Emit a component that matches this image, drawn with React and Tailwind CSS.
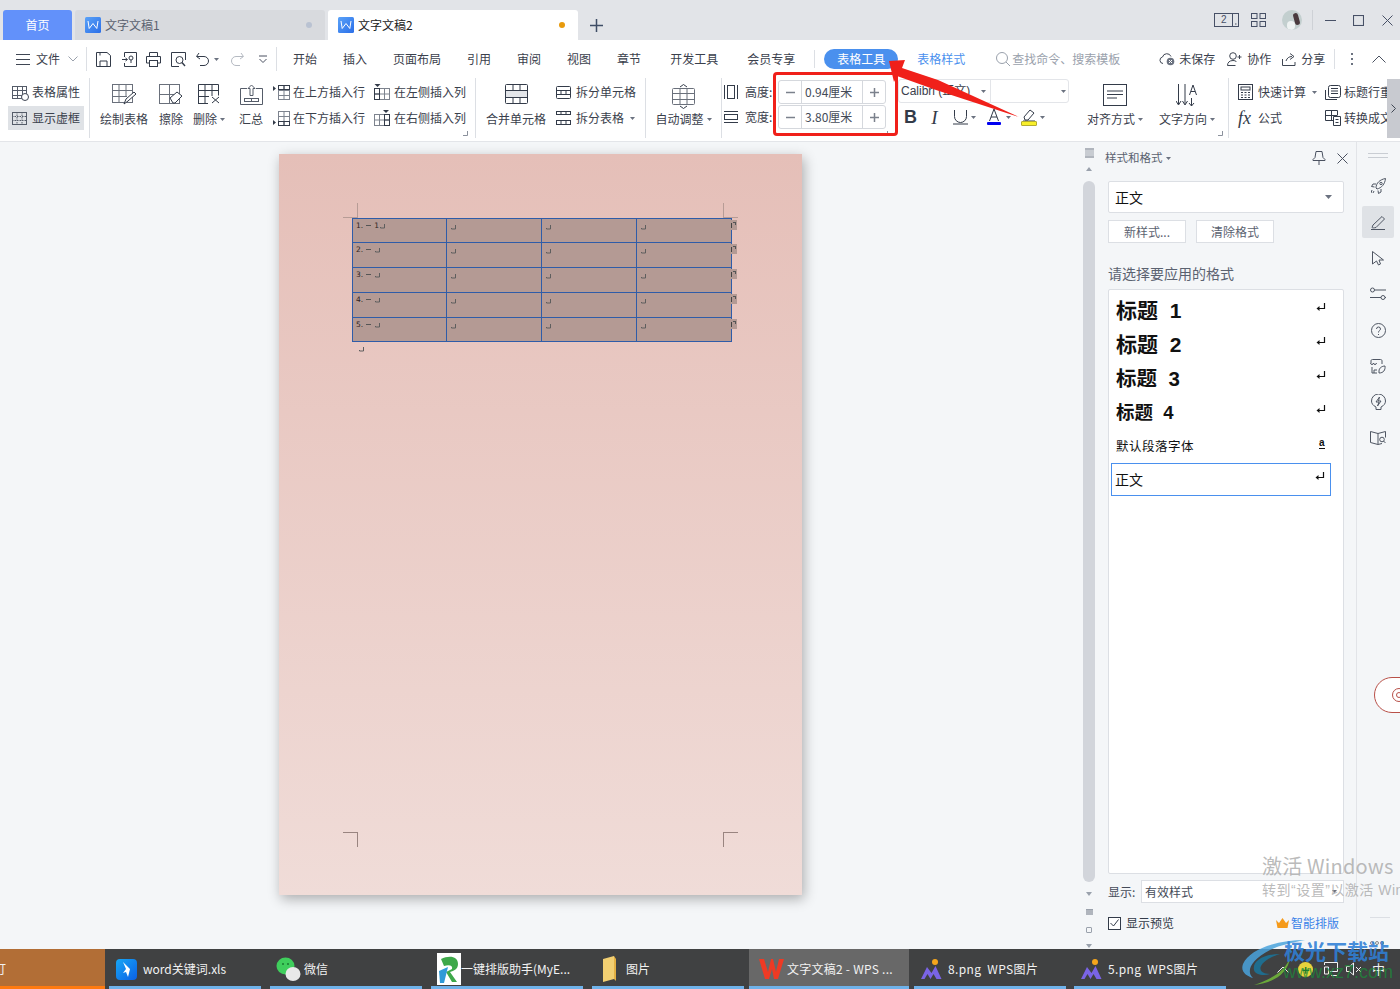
import React from "react";

const S = ({ w = 20, h = 20, vb, children, className = "" }) => (
  <svg width={w} height={h} viewBox={vb || `0 0 ${w} ${h}`} fill="none" stroke="currentColor" strokeWidth="1" className={"shrink-0 " + className}>
    {children}
  </svg>
);
const Caret = ({ className = "" }) => (
  <svg width="5" height="3" viewBox="0 0 5 3" className={"shrink-0 " + className}><path d="M0 0h5L2.500 3z" fill="#6b7280" /></svg>
);
const WDoc = () => (
  <svg width="16" height="16" viewBox="0 0 16 16" className="shrink-0">
    <defs><linearGradient id="wd" x1="0" y1="0" x2="1" y2="1"><stop offset="0" stopColor="#5aa2f8" /><stop offset="1" stopColor="#2b6fe8" /></linearGradient></defs>
    <rect width="16" height="16" rx="1.500" fill="url(#wd)" />
    <path d="M3 4l1.200 7.500L8 6.500l3.800 5L13 4" stroke="#fff" strokeWidth="1" fill="none" />
  </svg>
);
const Grid = ({ w = 16, h = 14, cols = 3, rows = 3, color = "#3f4653", fill = "none" }) => {
  const c = [], r = [];
  for (let i = 1; i < cols; i++) c.push(i);
  for (let i = 1; i < rows; i++) r.push(i);
  return (
    <S w={w} h={h} className="text-[#3f4653]">
      <rect x=".5" y=".5" width={w - 1} height={h - 1} fill={fill} stroke={color} />
      {c.map((i) => <path key={"c" + i} d={`M${Math.round((i * w) / cols) + 0.5} 0v${h}`} stroke={color} />)}
      {r.map((i) => <path key={"r" + i} d={`M0 ${Math.round((i * h) / rows) + 0.5}h${w}`} stroke={color} />)}
    </S>
  );
};

const Ret = ({ c = "#5e5e5e", className = "" }) => (
  <svg width="5" height="5" viewBox="0 0 5 5" className={"shrink-0 " + className}><path d="M4.500 0v4H.500M.500 4V3" stroke={c} fill="none" /></svg>
);
const RetBig = () => (
  <svg width="10" height="9" viewBox="0 0 10 9" className="shrink-0"><path d="M8.500 0v5.500H2" stroke="#111" strokeWidth="1.200" fill="none" /><path d="M3.500 3v5L.5 5.500z" fill="#111" /></svg>
);

const Sep = ({ h = "h-[24px]", className = "" }) => <div className={`w-px bg-[#dcdfe4] shrink-0 ${h} ${className}`} />;

function TitleBar() {
  return (
    <div className="h-[40px] bg-[#e2e4e8] shrink-0 flex items-end pl-[3px] text-[12px]">
      <div className="w-[69px] h-[30px] bg-[#6291fa] rounded-t-[3px] text-white flex items-center justify-center">首页</div>
      <div className="w-[250px] h-[30px] ml-[3px] bg-[#d8dade] rounded-t-[3px] flex items-center pl-[10px] pr-[13px] text-[#5b6270]">
        <WDoc /><span className="ml-[4px] flex-1">文字文稿1</span>
        <span className="w-[6px] h-[6px] rounded-full bg-[#b9c2d2]" />
      </div>
      <div className="w-[250px] h-[30px] ml-[3px] bg-white rounded-t-[3px] flex items-center pl-[10px] pr-[13px] text-[#222]">
        <WDoc /><span className="ml-[4px] flex-1">文字文稿2</span>
        <span className="w-[6px] h-[6px] rounded-full bg-[#e89a0c]" />
      </div>
      <div className="ml-[12px] h-[30px] flex items-center text-[#3f4d66]">
        <S w={13} h={13}><path d="M6.500 0v13M0 6.500h13" strokeWidth="1.500" /></S>
      </div>
      <div className="flex-1" />
      <div className="self-start h-[40px] flex items-center pr-[7px] text-[#475066]">
        <div className="relative w-[25px] h-[14px]">
          <S w={25} h={14}><rect x=".5" y=".5" width="24" height="13" /><path d="M18.500 0v14" /><path d="M21 11h1.500" /></S>
          <span className="absolute left-[7px] top-[2px] text-[10px] leading-[10px] font-['Liberation_Sans',sans-serif]">2</span>
        </div>
        <div className="ml-[12px]"><S w={15} h={14}><rect x=".5" y=".5" width="5.500" height="5" /><rect x="9" y=".5" width="5.500" height="5" /><rect x=".5" y="8.500" width="5.500" height="5" /><rect x="9" y="8.500" width="5.500" height="5" /></S></div>
        <div className="ml-[16px] w-[20px] h-[20px] rounded-full overflow-hidden bg-[#c3cfcf] relative">
          <div className="absolute right-[3px] top-[3px] w-[5px] h-[12px] rounded-full bg-[#4a3a3e] rotate-[-15deg]" />
          <div className="absolute left-[5px] top-[11px] w-[8px] h-[9px] rounded-full bg-[#eef2f2]" />
        </div>
        <div className="ml-[10px] w-px h-[20px] bg-[#ced1d6]" />
        <div className="ml-[12px]"><S w={11} h={11}><path d="M0 5.500h11" /></S></div>
        <div className="ml-[17px]"><S w={11} h={11}><rect x=".5" y=".5" width="10" height="10" strokeWidth="1.100" /></S></div>
        <div className="ml-[18px]"><S w={11} h={11}><path d="M.5.500l10 10M10.500.500l-10 10" /></S></div>
      </div>
    </div>
  );
}

const Tab = ({ children, ml = "ml-[26px]" }) => <span className={`${ml} shrink-0`}>{children}</span>;

function MenuRow() {
  return (
    <div className="h-[36px] pt-[2px] bg-white shrink-0 flex items-center text-[12px] text-[#3a404c] relative">
      <div className="ml-[16px] text-[#3f4653]"><S w={14} h={11}><path d="M0 .5h14M0 5.500h14M0 10.500h14" /></S></div>
      <span className="ml-[6px]">文件</span>
      <div className="ml-[8px] text-[#9aa1ac]"><S w={10} h={6}><path d="M.5.500L5 5l4.500-4.500" /></S></div>
      <Sep className="ml-[8px]" />
      <div className="ml-[9px] text-[#333b49]"><S w={15} h={15}><path d="M.5.500h10.500l3.500 3v11H.5z" /><path d="M4 14.500V9h7v5.500M4 .5v3" /></S></div>
      <div className="ml-[11px] text-[#333b49]"><S w={15} h={15}><path d="M2.500 5V.5h12v14h-12V11" /><path d="M0 7.500h5M3.500 6l2 1.500-2 1.500" /><circle cx="9" cy="6" r="2" /><path d="M9 8v3" /></S></div>
      <div className="ml-[9px] text-[#333b49]"><S w={15} h={15}><path d="M3.500 4V.5h8V4M3.500 11H.5V4.500h14V11h-3" /><rect x="3.500" y="8.500" width="8" height="6" /></S></div>
      <div className="ml-[10px] text-[#333b49]"><S w={15} h={15}><path d="M14.500 8V.5H.5v14H8" /><circle cx="8.500" cy="8" r="3.500" /><path d="M11 10.500l3 3.500" strokeWidth="1.400" /></S></div>
      <div className="ml-[10px] text-[#333b49]"><S w={14} h={14}><path d="M3 1L.5 4.500 4 7" /><path d="M1 4.500h7a4.500 4.500 0 010 9H4" /></S></div>
      <Caret className="ml-[4px]" />
      <div className="ml-[11px] text-[#b5bac2]"><S w={14} h={14}><path d="M11 1l2.500 3.500L10 7" /><path d="M13 4.500H6a4.500 4.500 0 000 9h4" /></S></div>
      <div className="ml-[15px] text-[#4a5160]"><S w={8} h={8}><path d="M0 1h8M.5 4L4 7.500 7.500 4" /></S></div>
      <Sep className="ml-[9px]" />
      <Tab ml="ml-[16px]">开始</Tab>
      <Tab>插入</Tab>
      <Tab>页面布局</Tab>
      <Tab>引用</Tab>
      <Tab>审阅</Tab>
      <Tab>视图</Tab>
      <Tab>章节</Tab>
      <Tab ml="ml-[29px]">开发工具</Tab>
      <Tab ml="ml-[29px]">会员专享</Tab>
      <Sep h="h-[18px]" className="ml-[19px]" />
      <span className="ml-[9px] h-[20px] w-[74px] rounded-full bg-[#4a90ee] text-white flex items-center justify-center shrink-0">表格工具</span>
      <span className="ml-[19px] text-[#4a90ee] shrink-0">表格样式</span>
      <div className="ml-[31px] text-[#9aa1ac]"><S w={14} h={14}><circle cx="6" cy="6" r="5.500" /><path d="M10 10l4 4" /></S></div>
      <span className="ml-[2px] text-[#9aa1ac] shrink-0">查找命令、搜索模板</span>
      <div className="ml-[39px] text-[#3f4653]"><S w={16} h={14}><path d="M4 11.500a3.300 3.300 0 01-.5-6.500 4.500 4.500 0 018.500-.5" /><circle cx="11.500" cy="9.500" r="3.800" fill="#6b7280" stroke="none" /><path d="M10 8l3 3M13 8l-3 3" stroke="#fff" /></S></div>
      <span className="ml-[4px] shrink-0">未保存</span>
      <div className="ml-[12px] text-[#3f4653]"><S w={15} h={14}><circle cx="6" cy="4" r="3.300" /><path d="M.5 13.500c0-3 2-5 5.500-5 1.500 0 3 .5 3.500 1.500M.5 13.500h8M10.500 5h4M12.500 3v4" /></S></div>
      <span className="ml-[5px] shrink-0">协作</span>
      <div className="ml-[11px] text-[#3f4653]"><S w={14} h={13}><path d="M.5 6v6.500h12.500V9" /><path d="M4 8c1-3 3-4.500 6-4.500M8 .5l4 3-4 3" /></S></div>
      <span className="ml-[5px] shrink-0">分享</span>
      <Sep h="h-[20px]" className="ml-[9px]" />
      <div className="ml-[16px] flex flex-col gap-[3px]">
        <span className="w-[2px] h-[2px] bg-[#6b7280]" /><span className="w-[2px] h-[2px] bg-[#6b7280]" /><span className="w-[2px] h-[2px] bg-[#6b7280]" />
      </div>
      <div className="ml-[19px] text-[#4a5160]"><S w={14} h={8}><path d="M.5 7.500L7 1l6.500 6.500" /></S></div>
    </div>
  );
}

const Big = ({ w, icon, label, caret }) => (
  <div className={`${w} shrink-0 flex flex-col items-center pt-[8px]`}>
    <div className="h-[27px] flex items-start justify-center">{icon}</div>
    <div className="h-[16px] leading-[16px] whitespace-nowrap flex items-center gap-[3px]">{label}{caret && <Caret />}</div>
  </div>
);
const Small = ({ w, icon, label, caret, gap = "gap-[3px]" }) => (
  <div className={`${w} h-[26px] flex items-center ${gap} whitespace-nowrap shrink-0`}>
    <div className="w-[17px] flex justify-start shrink-0">{icon}</div>
    <span>{label}</span>{caret && <Caret className="ml-[3px]" />}
  </div>
);
const Corner = ({ className }) => (
  <svg width="5" height="5" viewBox="0 0 5 5" className={"absolute " + className}><path d="M4.500 0v4.500H0" stroke="#8b919c" fill="none" /></svg>
);

const InsRow = ({ bottom }) => (
  <svg width="17" height="15" viewBox="0 0 17 15" fill="none" className="shrink-0">
    <path d={bottom ? "M0 9l3 2.500L0 14z" : "M0 1l3 2.500L0 6z"} fill="#333b49" />
    <rect x="5.500" y=".5" width="11" height="14" stroke="#7d838e" />
    <path d="M5 5.500h12M5 10.500h12M11 0v15" stroke="#7d838e" />
    <rect x="5.500" y={bottom ? 10.5 : 0.5} width="11" height="4" stroke="#333b49" />
    <path d={bottom ? "M11 10v5" : "M11 0v5"} stroke="#333b49" />
  </svg>
);
const InsCol = ({ right }) => (
  <svg width="16" height="16" viewBox="0 0 16 16" fill="none" className="shrink-0">
    <path d={right ? "M9 0h6l-3 3z" : "M.5 0h6l-3 3z"} fill="#333b49" />
    <rect x=".5" y="4.500" width="15" height="11" stroke="#7d838e" />
    <path d="M5.500 4v12M10.500 4v12M0 10h16" stroke="#7d838e" />
    <rect x={right ? 10.5 : 0.5} y="4.500" width="5" height="11" stroke="#333b49" />
    <path d={right ? "M10 10h6" : "M0 10h6"} stroke="#333b49" />
  </svg>
);

function Stepper({ v }) {
  return (
    <div className="w-[108px] h-[24px] border border-[#d5d8dd] rounded-[3px] flex items-center">
      <div className="w-[23px] h-full border-r border-[#d5d8dd] flex items-center justify-center text-[#7b818c]"><S w={9} h={9}><path d="M0 4.500h9" strokeWidth="1.500" /></S></div>
      <div className="flex-1 pl-[3px] text-[#444b58] whitespace-nowrap">{v}</div>
      <div className="w-[23px] h-full border-l border-[#d5d8dd] flex items-center justify-center text-[#7b818c]"><S w={9} h={9}><path d="M0 4.500h9M4.500 0v9" strokeWidth="1.500" /></S></div>
    </div>
  );
}

function Ribbon() {
  return (
    <div className="h-[66px] bg-white shrink-0 flex text-[12px] text-[#3a404c] border-b border-[#e3e5e9] relative overflow-hidden">
      <div className="ml-[8px] w-[76px] pt-[4px] shrink-0">
        <div className="h-[24px] flex items-center pl-[4px] gap-[3px]">
          <div className="relative">
            <Grid w={15} h={13} cols={3} rows={3} color="#555c69" />
            <span className="absolute right-[-2px] bottom-[-2px] w-[8px] h-[8px] rounded-full bg-white border border-[#3f4653]" />
          </div>
          <span className="ml-[2px]">表格属性</span>
        </div>
        <div className="h-[24px] mt-[2px] bg-[#dfe2e6] flex items-center pl-[4px] gap-[5px]">
          <S w={15} h={13} className="text-[#555c69]"><rect x=".5" y=".5" width="14" height="12" /><path d="M0 4.500h15M0 8.500h15M5 0v13M10 0v13" strokeDasharray="1.500 1" /></S>
          <span>显示虚框</span>
        </div>
      </div>
      <Sep h="h-[60px]" className="ml-[5px] mt-[2px]" />
      <Big w="w-[68px]" label="绘制表格" icon={
        <S w={24} h={21} className="text-[#6a707b]"><rect x=".5" y=".5" width="20" height="18" /><path d="M0 6.500h21M0 12.500h15M7 0v18M14 0v13" /><path d="M12 20l2-5 8-7 2 2-8 7z" fill="#fff" stroke="#333b49" /></S>} />
      <Big w="w-[26px]" label="擦除" icon={
        <S w={24} h={21} className="text-[#6a707b]"><rect x=".5" y=".5" width="20" height="19" /><path d="M0 10.500h21M10.500 0v20" /><path d="M11 14l7-6 5 4-7 7h-2z" fill="#fff" stroke="#333b49" /></S>} />
      <Big w="w-[50px]" label="删除" caret icon={
        <S w={23} h={20} className="text-[#333b49]"><path d="M.5 19.500V.5h20v11M0 6.500h21M7 0v20M14 0v12M0 12.500h11M0 19.500h10" /><path d="M14 13l7 6M21 13l-7 6" /></S>} />
      <Big w="w-[34px]" label="汇总" icon={
        <S w={23} h={21} className="text-[#555c69]"><path d="M7 4.500H.5v16h22v-16H16" /><path d="M8 4.500L11.500 1 15 4.500h-2v7h-3v-7z" /><rect x="4.500" y="14.500" width="14" height="3" /><path d="M11.500 14v4" /></S>} />
      <div className="ml-[5px] pt-[3px] w-[101px] shrink-0">
        <Small label="在上方插入行" icon={<InsRow />} />
        <Small label="在下方插入行" icon={<InsRow bottom />} />
      </div>
      <div className="pt-[3px] w-[92px] shrink-0">
        <Small label="在左侧插入列" icon={<InsCol />} />
        <Small label="在右侧插入列" icon={<InsCol right />} />
      </div>
      <div className="relative w-[9px] shrink-0"><Corner className="left-[-3px] bottom-[5px]" /></div>
      <Sep h="h-[60px]" className="mt-[2px]" />
      <Big w="w-[80px]" label="合并单元格" icon={
        <S w={23} h={20} className="text-[#333b49]"><rect x=".5" y=".5" width="22" height="19" rx="1" /><rect x="1" y="7" width="21" height="6" fill="#e3e5e9" stroke="none" /><path d="M0 6.500h23M0 13.500h23M8 0v6M15 0v6M8 14v6M15 14v6" /></S>} />
      <div className="pt-[3px] w-[89px] shrink-0">
        <Small gap="gap-[3px]" label="拆分单元格" icon={<S w={15} h={13} className="text-[#333b49]"><rect x=".5" y=".5" width="14" height="12" rx="1" /><path d="M0 4.500h15M0 8.500h15M5 4v5M10 4v5" /></S>} />
        <Small gap="gap-[3px]" label="拆分表格" caret icon={<S w={15} h={14} className="text-[#333b49]"><path d="M0 .5h15M0 3.500h15M0 9.500h15M0 13.500h15M.5 9v5M14.500 9v5M5 9v5M10 9v5M5 0v4M10 0v4M.5 0v4M14.500 0v4" /></S>} />
      </div>
      <Sep h="h-[60px]" className="mt-[2px]" />
      <Big w="w-[75px]" label="自动调整" caret icon={
        <S w={23} h={25} className="text-[#6a707b]"><path d="M8 3l3.500-2.500L15 3M8 22l3.500 2.500L15 22" stroke="#333b49" /><rect x=".5" y="4.500" width="22" height="16" rx="1" /><path d="M0 9.500h23M0 15.500h23M8 5v15M15 5v15" /></S>} />
      <Sep h="h-[60px]" className="mt-[2px]" />
      <div className="pt-[3px] w-[56px] shrink-0 text-[#3a404c]">
        <div className="h-[25px] flex items-center pl-[2px] gap-[7px]">
          <S w={14} h={14} className="text-[#333b49]"><path d="M.5 0v14M13.500 0v14" /><rect x="3.500" y=".5" width="7" height="13" /></S>
          <span className="mr-[-6px] whitespace-nowrap">高度:</span>
        </div>
        <div className="h-[25px] flex items-center pl-[2px] gap-[7px]">
          <S w={14} h={12} className="text-[#333b49]"><path d="M0 .5h14M0 11.500h14" /><rect x=".5" y="3.500" width="13" height="5" /></S>
          <span className="mr-[-6px] whitespace-nowrap">宽度:</span>
        </div>
      </div>
      <div className="pt-[4px] shrink-0 flex flex-col gap-[1px] text-[#444b58]">
        <Stepper v="0.94厘米" />
        <Stepper v="3.80厘米" />
      </div>
      <div className="relative w-[12px] shrink-0"><Corner className="left-[-3px] bottom-[5px]" /></div>
      <div className="w-[179px] pt-[3px] shrink-0">
        <div className="w-[171px] h-[24px] border border-[#e3e5e9] rounded-[3px] flex items-center">
          <div className="w-[92px] h-full border-r border-[#e3e5e9] flex items-center pl-[2px] pr-[4px] justify-between">
            <span className="whitespace-nowrap font-['Liberation_Sans','Noto_Sans_CJK_SC',sans-serif] text-[12px]">Calibri (正文)</span><Caret />
          </div>
          <div className="flex-1 flex justify-end pr-[2px]"><Caret /></div>
        </div>
        <div className="h-[24px] mt-[2px] flex items-center text-[#333b49]">
          <span className="ml-[6px] w-[13px] text-center text-[18px] font-bold leading-none font-['Liberation_Sans',sans-serif]">B</span>
          <span className="ml-[11px] w-[13px] text-center text-[19px] italic leading-none font-['Liberation_Serif',serif]">I</span>
          <div className="ml-[12px] w-[15px]"><S w={15} h={16}><path d="M1.500 1v6.500a6 6 0 0012 0V1M0 15h15" /></S></div>
          <Caret className="ml-[3px]" />
          <div className="ml-[11px] relative w-[14px] h-[18px] flex flex-col items-center">
            <S w={14} h={13}><path d="M2.500 13L7 1l4.500 12M4 9h6" /></S>
            <div className="w-[14px] h-[3px] bg-[#0000f0] rounded-[1px] mt-[1px]" />
          </div>
          <Caret className="ml-[5px]" />
          <div className="ml-[10px] flex flex-col items-center">
            <S w={14} h={12}><path d="M3 11l-1-3 6-7 4 3-6 7zM1 12h12" /></S>
            <div className="w-[16px] h-[5px] bg-[#f8ef2a] border border-[#b4ac30] rounded-[1px]" />
          </div>
          <Caret className="ml-[3px]" />
        </div>
      </div>
      <Big w="w-[76px]" label="对齐方式" caret icon={
        <S w={24} h={22} className="text-[#333b49]"><rect x=".5" y=".5" width="23" height="21" strokeWidth="1" /><path d="M4 7h16M4 10.500h16M4 14h10" /></S>} />
      <Big w="w-[68px]" label="文字方向" caret icon={
        <S w={22} h={24} className="text-[#333b49]"><path d="M2.500 0v20M0 17l2.500 4L5 17M9 0v20M6.500 17L9 21l2.500-4M15.500 14v8M13 19l2.500 3 2.500-3" /><path d="M13.500 11l3.500-10 3.500 10M15 7.500h4" /></S>} />
      <div className="relative w-[7px] shrink-0"><Corner className="left-[-3px] bottom-[5px]" /></div>
      <Sep h="h-[60px]" className="mt-[2px]" />
      <div className="pt-[3px] w-[96px] pl-[9px] shrink-0">
        <Small gap="gap-[3px]" label="快速计算" caret icon={<S w={15} h={16} className="text-[#333b49]"><rect x=".5" y=".5" width="14" height="15" /><rect x="3" y="3" width="9" height="3" /><path d="M3 8.500h2M6.500 8.500h2M10 8.500h2M3 11h2M6.500 11h2M10 11h2M3 13.500h2M6.500 13.500h2M10 13.500h2" /></S>} />
        <Small gap="gap-[3px]" label="公式" icon={<span className="text-[18px] leading-none italic font-['Liberation_Serif',serif] text-[#333b49] whitespace-nowrap">fx</span>} />
      </div>
      <div className="pt-[3px] w-[62px] overflow-hidden shrink-0">
        <Small gap="gap-[2px]" label="标题行重复" icon={<S w={16} h={15} className="text-[#333b49]"><rect x="3.500" y=".5" width="12" height="12" rx="2" /><path d="M6 3.500h7M6 6h7M6 8.500h7" /><path d="M.5 5v9.500H12" /></S>} />
        <Small gap="gap-[2px]" label="转换成文本" icon={<S w={16} h={16} className="text-[#333b49]"><path d="M8 10.500H.5V.5h12v5M0 5.500h12M6.500 0v10" /><path d="M8.500 6.500h7v9h-7zM10.500 9.500h3M10.500 12.500h3" fill="#fff" /></S>} />
      </div>
      <div className="w-[13px] ml-auto my-[3px] bg-[#c8cad0] flex items-center justify-center text-[#3f4653]"><S w={5} h={9}><path d="M.5.500l4 4-4 4" /></S></div>
    </div>
  );
}

function Page() {
  const rows = [24, 25, 25, 25, 24];
  const mono = "font-['DejaVu_Sans',sans-serif] text-[7.500px] text-[#2f2422]";
  return (
    <div className="mt-[12px] h-[741px] w-[523px] bg-gradient-to-b from-[#e5bfb8] to-[#f0dcd8] shadow-[2px_4px_12px_rgba(0,0,0,0.3)] relative pl-[73px] pt-[64px]">
      <div className="absolute left-[64px] top-[49px] w-[15px] h-[15px] border-r border-b border-[#b79c96]" />
      <div className="absolute left-[444px] top-[49px] w-[15px] h-[15px] border-l border-b border-[#b79c96]" />
      <div className="absolute left-[64px] top-[678px] w-[15px] h-[15px] border-r border-t border-[#998480]" />
      <div className="absolute left-[444px] top-[678px] w-[15px] h-[15px] border-l border-t border-[#998480]" />
      <div className="w-[380px] bg-[#b49a94] border border-[#2f5ca8] relative">
        {rows.map((h, i) => (
          <div key={i} className={`flex relative ${i ? "border-t border-[#2f5ca8]" : ""}`} style={{ height: h - (i ? 0 : 1) }}>
            {[0, 1, 2, 3].map((c) => (
              <div key={c} className={`${c ? "w-[95px] border-l border-[#2f5ca8]" : "w-[93px]"} flex items-start pl-[3px] pt-[2px] leading-[9px] ${c ? "pl-[4px]" : ""}`}>
                {c === 0 ? (
                  <>
                    <span className={mono}>{i + 1}.</span>
                    <span className="ml-[3px] w-[5px] h-px bg-[#555] mt-[4px]" />
                    {i === 0 && <span className={"ml-[3px] " + mono}>1</span>}
                    <Ret className={i === 0 ? "ml-[1px] mt-[3px]" : "ml-[4px] mt-[3px]"} />
                  </>
                ) : <Ret className="mt-[4px]" />}
              </div>
            ))}
            <div className="absolute left-[378px] top-[1px] w-[6px] h-[10px] bg-[#b49a94] flex items-center"><span className="w-px h-[5px] bg-[#444]" /><span className="w-[3px] h-[3px] ml-px mb-[3px] border-t border-r border-[#555]" /></div>
          </div>
        ))}
      </div>
      <div className="h-[5px] mt-[5px] pl-[7px] flex"><Ret /></div>
    </div>
  );
}

function Panel() {
  const items = [
    ["标题", "1", "text-[21px]"],
    ["标题", "2", "text-[21px]"],
    ["标题", "3", "text-[20.500px]"],
    ["标题", "4", "text-[18.500px]"],
  ];
  return (
    <div className="w-[261px] shrink-0 border-r border-[#e2e4e8] flex flex-col px-[12px] relative">
      <div className="h-[30px] flex items-center mt-[1px] text-[11.500px] text-[#5b6270] ml-[-3px] mr-[-4px]">
        <span>样式和格式</span><Caret className="ml-[3px]" />
        <div className="flex-1" />
        <div className="text-[#4a5160]"><S w={14} h={14}><path d="M4 .5h6l1 6 2 2v1H1v-1l2-2zM7 9.500V14" /></S></div>
        <div className="ml-[11px] text-[#4a5160]"><S w={11} h={11}><path d="M.5.500l10 10M10.500.500l-10 10" /></S></div>
      </div>
      <div className="mt-[8px] h-[32px] bg-white border border-[#dcdfe4] rounded-[2px] flex items-center pl-[6px] pr-[11px] text-[14px] text-[#111]">
        <span className="flex-1">正文</span>
        <svg width="7" height="4" viewBox="0 0 7 4"><path d="M0 0h7L3.500 4z" fill="#6b7280" /></svg>
      </div>
      <div className="mt-[7px] flex gap-[10px] text-[12px] text-[#5b6270]">
        <div className="w-[78px] h-[23px] bg-white border border-[#dcdfe4] flex items-center justify-center">新样式...</div>
        <div className="w-[78px] h-[23px] bg-white border border-[#dcdfe4] flex items-center justify-center">清除格式</div>
      </div>
      <div className="mt-[22px] h-[16px] leading-[16px] text-[14px] text-[#5b6270] shrink-0 whitespace-nowrap">请选择要应用的格式</div>
      <div className="mt-[8px] h-[585px] bg-white border border-[#dcdfe4] rounded-[2px] pl-[2px] pt-[3px] flex flex-col shrink-0">
        {items.map(([a, n, sz]) => (
          <div key={n} className="h-[34px] flex items-center pl-[5px] pr-[5px] w-[220px] text-[#111]">
            <span className={`${sz} font-bold flex-1 whitespace-pre`}>{a}<span className="font-['Liberation_Sans',sans-serif]">{"  "}{n}</span></span>
            <span className="mb-[6px]"><RetBig /></span>
          </div>
        ))}
        <div className="h-[34px] flex items-center pl-[5px] pr-[6px] w-[220px] text-[12.500px] text-[#111] tracking-[0.5px]">
          <span className="flex-1">默认段落字体</span>
          <span className="mb-[6px] text-[10px] leading-[10px] border-b border-[#111] font-['Liberation_Sans',sans-serif] font-bold">a</span>
        </div>
        <div className="h-[33px] w-[220px] border border-[#4a90ee] flex items-center pl-[3px] pr-[5px] text-[14px] text-[#111]">
          <span className="flex-1">正文</span>
          <span className="mb-[6px]"><RetBig /></span>
        </div>
      </div>
      <div className="mt-[6px] h-[23px] flex items-center text-[12px] text-[#444b58] shrink-0">
        <span className="w-[33px] shrink-0">显示:</span>
        <div className="flex-1 h-[23px] bg-white border border-[#dcdfe4] flex items-center pl-[3px] pr-[6px]">
          <span className="flex-1">有效样式</span><Caret />
        </div>
      </div>
      <div className="mt-[13px] flex items-center text-[12px] text-[#333b49] shrink-0 h-[14px]">
        <span className="w-[13px] h-[13px] border border-[#333b49] bg-white flex items-center justify-center">
          <S w={9} h={8}><path d="M.5 4l3 3L8.500.5" /></S>
        </span>
        <span className="ml-[5px] flex-1">显示预览</span>
        <svg width="13" height="11" viewBox="0 0 13 11"><path d="M0 2l3 3 3.500-5L10 5l3-3-1.500 8h-10z" fill="#f59a1a" /></svg>
        <span className="ml-[2px] mr-[5px] text-[#3b82e8]">智能排版</span>
      </div>
    </div>
  );
}

function Sidebar() {
  const Cell = ({ children, active }) => (
    <div className={`w-[32px] h-[32px] rounded-[2px] flex items-center justify-center ${active ? "bg-[#dfe2e6]" : ""} text-[#4f5663] mb-[4px]`}>{children}</div>
  );
  return (
    <div className="flex-1 relative flex flex-col items-center pt-[11px]">
      <div className="w-[20px] h-[5px] border-y border-[#c9cdd3] mb-[12px] mr-[1px]" />
      <div className="mr-[1px]">
        <Cell><S w={15} h={16}><path d="M5 10C5 5 9 1.500 14.500.5 14 6 10.500 10 6 11zM5 6H2L.5 8.500l3 .5M10 11v3l-2.500 1.500-.5-3M1 12l-1 3M3 13l-1 2" /><circle cx="10" cy="5.500" r="1.200" /></S></Cell>
        <Cell active><S w={16} h={15}><path d="M3 10L12 1.500l2.500 2.500L6 12.500c-2 .5-3.500.5-4 0zM1 14.500h14" /></S></Cell>
        <Cell><S w={12} h={15}><path d="M.5.500l11 8.500H7l1.500 4-2 1-2-4L.5 13z" /></S></Cell>
        <Cell><S w={16} h={14}><circle cx="2.500" cy="3" r="2" /><path d="M4.500 3H16M0 10.500h11M15 10.500h1" /><circle cx="13" cy="10.500" r="2" /></S></Cell>
        <Cell><S w={15} h={15}><circle cx="7.500" cy="7.500" r="7" /><path d="M5.500 6a2 2 0 114 0c0 1.500-2 1.500-2 3.500" /><path d="M7.500 11v1" /></S></Cell>
        <Cell><S w={16} h={15}><path d="M2 8v6h5M1 4V2c0-1 .5-1.500 1.500-1.500h8c1 0 1.500.5 1.500 1.500v3M.5 4c0 2 3 2 3 0 0 2 3 2 3 0M4 14v-3h3" /><path d="M9 12c0-3 3-5 6-5 .5 4-1.500 7-6 7z" /></S></Cell>
        <Cell><S w={15} h={16}><path d="M5 13C2 11.500.5 9.500.5 7a7 7 0 1114 0c0 2.500-1.500 4.500-4.500 6v2.500H5z" /><path d="M8.500 3L5 8h3l-1.500 4L10 7H7.500z" /></S></Cell>
        <Cell><S w={16} h={14}><path d="M8 2.500L.5.500v11l7.500 2 4-1M8 2.500l7.500-2v6M8 2.500V13" /><circle cx="12" cy="8.500" r="2.300" /><path d="M13.500 10l2 2" /></S></Cell>
      </div>
      <div className="absolute left-[17px] top-[535px] w-[40px] h-[36px] bg-white rounded-l-full border border-[#b85048] flex items-center pl-[17px]">
        <span className="w-[14px] h-[14px] rounded-full border border-[#b85048] flex items-center justify-center"><span className="w-[6px] h-[6px] rounded-full border border-[#b85048]" /></span>
      </div>
      <div className="absolute left-[13px] top-[775px] w-[20px] h-px bg-[#dcdfe4]" />
      <div className="absolute left-[13px] top-[799px] flex gap-[1px]">
        <span className="w-[4px] h-[4px] rounded-full border border-[#888]" /><span className="w-[4px] h-[4px] rounded-full border border-[#888]" /><span className="w-[4px] h-[4px] rounded-full border border-[#888]" />
      </div>
    </div>
  );
}

const Pic = () => (
  <svg width="23" height="23" viewBox="0 0 23 23" className="shrink-0">
    <circle cx="15" cy="4" r="3" fill="#f6a61c" />
    <path d="M1 21l6-12 4.500 6 4-7 6 13h-5l-3-5-3 5-3-5-3 5z" fill="#7a64e6" />
  </svg>
);

const TB = ({ w, children, active }) => (
  <div className={`${w} h-full shrink-0 relative flex items-center ${active ? "bg-[#686868]" : ""}`}>
    {children}
    <div className="absolute left-0 right-0 bottom-0 h-[3px] bg-[#6fb2ea]" />
  </div>
);

function Taskbar() {
  return (
    <div className="h-[40px] shrink-0 bg-[#404142] flex text-[12px] text-[#f2f2f2] relative overflow-hidden">
      <div className="w-[105px] h-full bg-[#b26e36] relative flex items-center overflow-hidden">
        <span className="ml-[-6px]">订</span>
        <div className="absolute left-0 right-0 bottom-0 h-[3px] bg-[#ff7a10]" />
      </div>
      <div className="w-[4px]" />
      <TB w="w-[152px]">
        <svg width="21" height="21" viewBox="0 0 21 21" className="ml-[7px] shrink-0"><defs><linearGradient id="x1" x1="0" y1="0" x2="1" y2="1"><stop offset="0" stopColor="#17a7f5" /><stop offset="1" stopColor="#0b60e6" /></linearGradient></defs><rect width="21" height="21" rx="4" fill="url(#x1)" /><path d="M7 3l7 7-2 8-2-5-3 1 3-4z" fill="#fff" /></svg>
        <span className="ml-[6px] whitespace-nowrap">word关键词.xls</span>
      </TB>
      <div className="w-[9px]" />
      <TB w="w-[152px]">
        <svg width="25" height="27" viewBox="0 0 25 27" className="ml-[6px] shrink-0"><ellipse cx="9.500" cy="10" rx="9" ry="8.500" fill="#3fce5c" /><ellipse cx="17" cy="18" rx="7.500" ry="7" fill="#e8e8e8" /><circle cx="7" cy="8" r="1" fill="#1a7a30" /><circle cx="12" cy="8" r="1" fill="#1a7a30" /></svg>
        <span className="ml-[3px] whitespace-nowrap">微信</span>
      </TB>
      <div className="w-[9px]" />
      <TB w="w-[152px]">
        <svg width="24" height="32" viewBox="0 0 24 32" className="ml-[6px] shrink-0"><rect width="24" height="32" fill="#fff" /><path d="M4 6c8-4 17-3 17 5 0 5-4 7-8 8l7 10h-5l-6-10 6-3c1-3-2-5-8-3z" fill="#3ea84a" /><path d="M2 18l9-4-4 16H3z" fill="#2f9ad8" /></svg>
        <span className="ml-[0px] whitespace-nowrap">一键排版助手(MyE...</span>
      </TB>
      <div className="w-[9px]" />
      <TB w="w-[152px]">
        <svg width="14" height="29" viewBox="0 0 14 29" className="ml-[10px] shrink-0"><path d="M1 4l11-3v23l-11 3z" fill="#f2cf72" /><path d="M12 1v23l2 2V4z" fill="#e3b043" /></svg>
        <span className="ml-[10px] whitespace-nowrap">图片</span>
      </TB>
      <div className="w-[5px]" />
      <TB w="w-[160px]" active>
        <svg width="25" height="22" viewBox="0 0 25 22" className="ml-[10px] shrink-0"><path d="M0 1h5l4 13 3-13h2l3 13 3-13h5l-6 20h-4l-2-10-3 10H6z" fill="#ee3a24" /></svg>
        <span className="ml-[3px] whitespace-nowrap tracking-[0.25px]">文字文稿2 - WPS ...</span>
      </TB>
      <div className="w-[5px]" />
      <TB w="w-[152px]">
        <div className="ml-[6px]"><Pic /></div>
        <span className="ml-[5px] whitespace-pre tracking-[0.35px]">8.png  WPS图片</span>
      </TB>
      <div className="w-[8px]" />
      <TB w="w-[152px]">
        <div className="ml-[6px]"><Pic /></div>
        <span className="ml-[5px] whitespace-pre tracking-[0.35px]">5.png  WPS图片</span>
      </TB>
      <div className="ml-[51px] flex items-center h-full text-[#f2f2f2]">
        <S w={12} h={7}><path d="M.5 6.500L6 1l5.500 5.500" /></S>
        <span className="ml-[9px] w-[15px] h-[15px] rounded-full bg-[#e8d23c] flex items-center justify-center text-[#1c7a2c] text-[13px] leading-none font-bold">+</span>
        <div className="ml-[11px]"><S w={15} h={14}><path d="M.5 3V.5h13v9H6M.5 5v7h4V5zM7 13.500h6" /></S></div>
        <div className="ml-[7px]"><S w={16} h={14}><path d="M.5 4.500h3L7.500 1v12l-4-3.500h-3zM10 5l5 5M15 5l-5 5" /></S></div>
        <span className="ml-[10px] text-[13px]">中</span>
      </div>
    </div>
  );
}

export default function App() {
  return (
    <div className="w-[1400px] h-[989px] relative overflow-hidden flex flex-col bg-[#f4f6f8] font-['Noto_Sans_CJK_SC','Noto_Sans',sans-serif]">
      <TitleBar />
      <MenuRow />
      <Ribbon />
      <div className="flex-1 flex min-h-0 overflow-hidden">
        <div className="w-[1082px] shrink-0 flex justify-center pr-[1px]"><Page /></div>
        <div className="w-[14px] shrink-0 bg-[#f4f6f8] flex flex-col items-center pt-[6px] text-[#9aa1ac]">
          <span className="w-[9px] h-[10px] border-t-[2px] border-b-[2px] border-[#b0b5bd] bg-[#c8ccd2]" />
          <span className="mt-[9px] w-0 h-0 border-x-[3.500px] border-x-transparent border-b-[4px] border-b-[#9aa1ac]" />
          <span className="mt-[10px] w-[12px] h-[701px] rounded-full bg-[#d2d5db] shrink-0" />
          <span className="mt-[10px] w-0 h-0 border-x-[3.500px] border-x-transparent border-t-[4px] border-t-[#9aa1ac]" />
          <span className="mt-[13px] w-[7px] h-[6px] border-t border-[#9aa1ac] bg-[#b0b5bd]" />
          <span className="mt-[12px] w-[6px] h-[6px] rounded-[1px] border border-[#9aa1ac]" />
          <span className="mt-[11px] w-0 h-0 border-x-[3.500px] border-x-transparent border-t-[4px] border-t-[#9aa1ac]" />
        </div>
        <Panel />
        <Sidebar />
      </div>
      <Taskbar />

      {/* annotation overlay */}
      <div className="absolute left-[773px] top-[72px] w-[125px] h-[64px] border-[3px] border-[#f0201a] rounded-[4px] pointer-events-none" />
      <svg width="1400" height="150" viewBox="0 0 1400 150" className="absolute left-0 top-0 pointer-events-none">
        <polygon points="889,61 905,60 902,68 938,80 1019,117 936,90 897,76 894,82" fill="#f0201a" />
      </svg>

      {/* windows watermark */}
      <div className="absolute left-[1262px] top-[853px] text-[20px] leading-[26px] tracking-[0.2px] text-[#a8a8a8]/80 whitespace-nowrap">激活 Windows</div>
      <div className="absolute left-[1262px] top-[880px] text-[14px] leading-[20px] tracking-[0.5px] text-[#a8a8a8]/80 whitespace-nowrap font-['Liberation_Sans','Noto_Sans_CJK_SC',sans-serif]">转到“设置”以激活 Windows。</div>

      {/* site watermark */}
      <div className="absolute left-[1240px] top-[938px] pointer-events-none">
        <svg width="66" height="48" viewBox="0 0 66 48">
          <path d="M65 2C40 2 10 10 3 26c-3 8 4 12 10 14C6 34 10 22 30 12 40 7 55 4 65 2z" fill="#4aa3dc" opacity=".85" />
          <path d="M40 16c-16 0-28 7-26 16 1 5 10 6 16 4-8 0-11-4-9-8 3-6 12-10 19-12z" fill="#1f6d8e" />
          <path d="M50 20c-4 10-14 20-36 27 20-2 34-12 36-27z" fill="#6aa83a" />
        </svg>
      </div>
      <div className="absolute left-[1284px] top-[937px] text-[21px] leading-[26px] font-bold text-[#2f7fd6]/90 whitespace-nowrap">极光下载站</div>
      <div className="absolute left-[1283px] top-[961px] text-[18px] leading-[22px] text-[#1c8a3a]/75 whitespace-nowrap font-['Liberation_Sans',sans-serif]">www.xz7.com</div>
    </div>
  );
}
